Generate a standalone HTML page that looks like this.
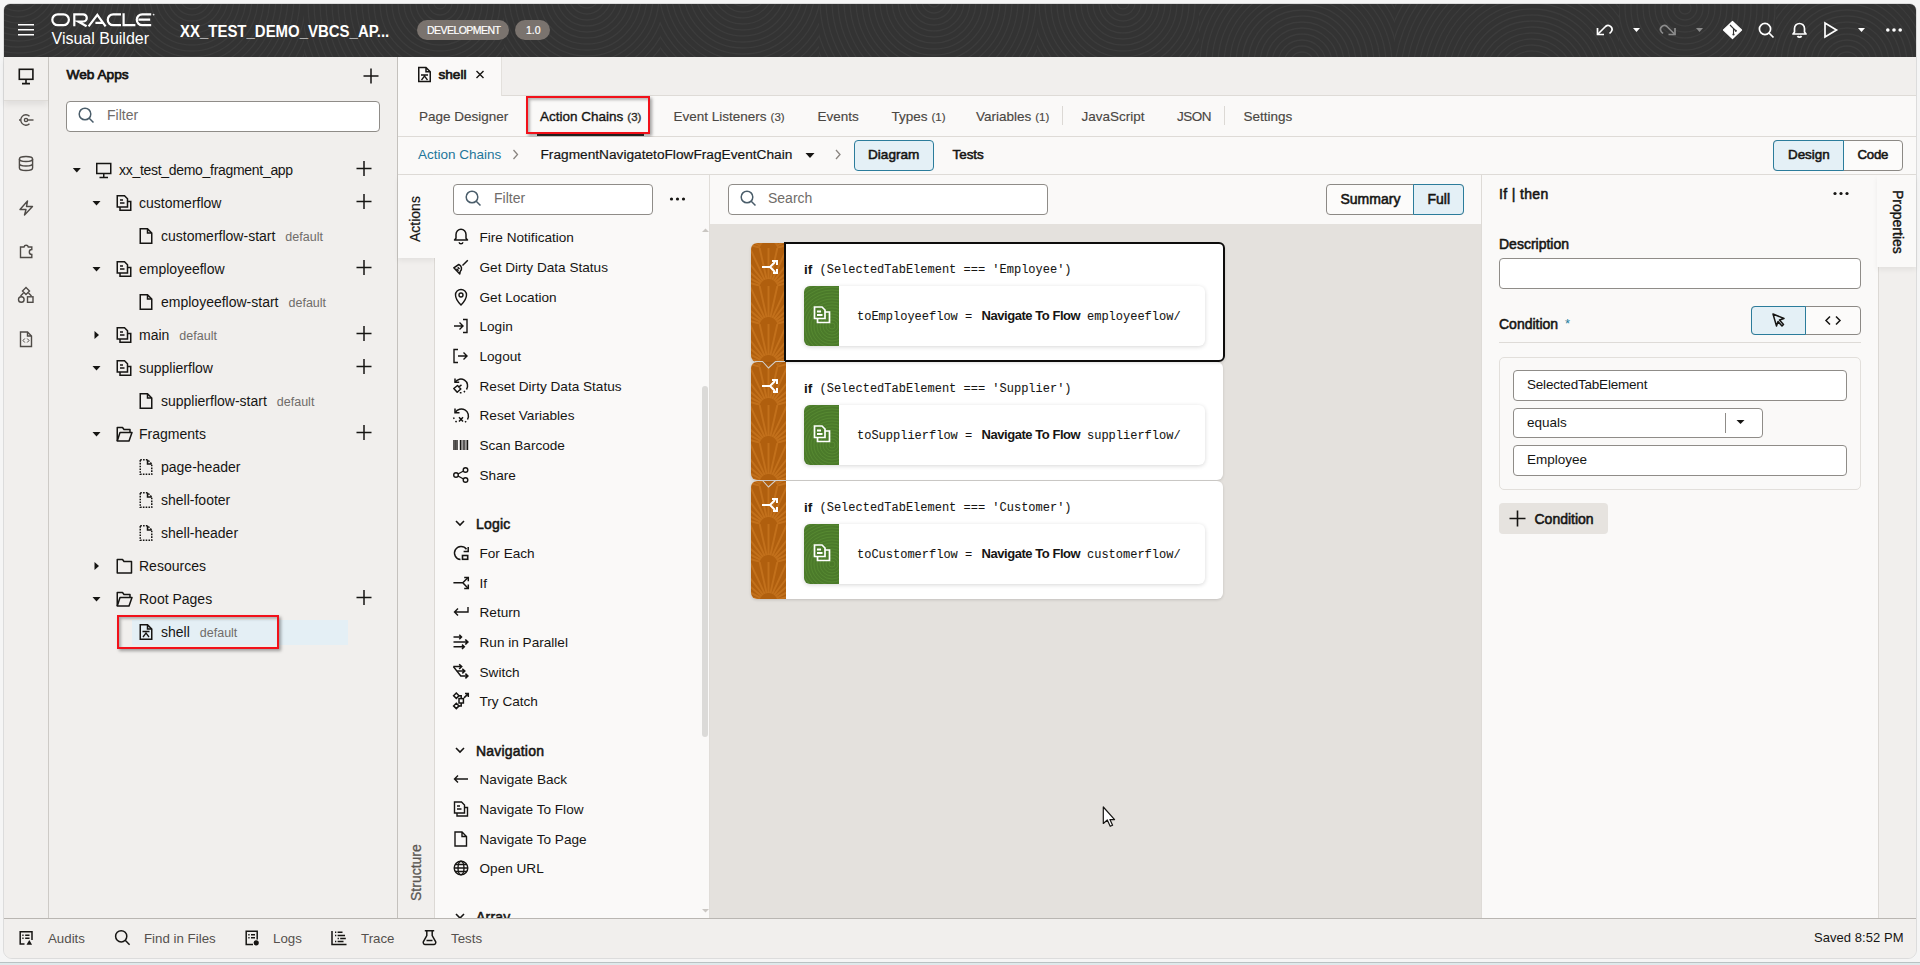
<!DOCTYPE html>
<html><head><meta charset="utf-8">
<style>
*{box-sizing:border-box;margin:0;padding:0}
html,body{width:1920px;height:965px;overflow:hidden;background:#f5f5f5;font-family:"Liberation Sans",sans-serif;color:#161513;font-size:14px}
.a{position:absolute}
svg{display:block}
#hdr{left:4px;top:4px;width:1912px;height:53px;background:#333;border-radius:6px 6px 0 0;overflow:hidden}
#rail{left:4px;top:57px;width:45px;height:861px;background:#f1efed;border-right:1px solid #cdcac6}
#tree{left:49px;top:57px;width:349px;height:861px;background:#f1efed;border-right:1px solid #c4c1bd}
#ed{left:398px;top:57px;width:1518px;height:861px;background:#faf9f8}
#status{left:4px;top:918px;width:1912px;height:40px;background:#f1efed;border-top:1px solid #b9b6b2;border-radius:0 0 8px 8px}
.t{position:absolute;white-space:nowrap;line-height:1}
.tr{font-size:14px;line-height:16px}
.st{top:109.5px;font-size:13.5px;color:#4a4743;-webkit-text-stroke:0.15px #4a4743}
.cnt{font-size:11.5px;margin-left:4px;color:#4a4743}
.al{font-size:13.6px;line-height:16px;color:#161513}
.ah{font-size:14px;line-height:16px;color:#161513;-webkit-text-stroke:0.55px #161513;letter-spacing:0.2px}
.mono{font-family:"Liberation Mono",monospace;font-size:12px;line-height:14px;color:#161513;white-space:pre;-webkit-text-stroke:0.08px #161513}
.orng{background:#bb650f}
.grn{background:#4d7a2a}
.sb{top:931.5px;font-size:13.3px;color:#55514d}
.sbd{font-size:14px;color:#161513;-webkit-text-stroke:0.55px #161513}
.df{font-size:12.5px;color:#6f6c69;margin-left:10px}
</style></head><body>
<svg width="0" height="0" style="position:absolute"><defs><pattern id="fan" patternUnits="userSpaceOnUse" width="35" height="38" x="0" y="5"><rect width="35" height="38" fill="#b05f0e"/><path d="M8.8,37.7 L-28.9,27.6 M9.5,35.8 L-25.1,17.8 M10.6,34.2 L-19.3,9.1 M12.0,32.9 L-11.7,1.9 M13.7,31.8 L-2.8,-3.5 M15.6,31.2 L7.1,-6.9 M17.5,31.0 L17.5,-8.0 M19.4,31.2 L27.9,-6.9 M21.3,31.8 L37.8,-3.5 M23.0,32.9 L46.7,1.9 M24.4,34.2 L54.3,9.1 M25.5,35.8 L60.1,17.8 M26.2,37.7 L63.9,27.6" stroke="#c2701b" stroke-width="1.9" fill="none"/></pattern><pattern id="gr" patternUnits="userSpaceOnUse" width="35" height="60"><rect width="35" height="60" fill="#4b7a2a"/><g fill="none" stroke="#578a31" stroke-width="0.9"><circle cx="28" cy="40" r="3"/><circle cx="28" cy="40" r="6"/><circle cx="28" cy="40" r="9"/><circle cx="28" cy="40" r="12"/><circle cx="28" cy="40" r="15"/><circle cx="28" cy="40" r="18"/><circle cx="28" cy="40" r="21"/><circle cx="28" cy="40" r="24"/><circle cx="28" cy="40" r="27"/><circle cx="28" cy="40" r="30"/><circle cx="28" cy="40" r="33"/><circle cx="28" cy="40" r="36"/><circle cx="28" cy="40" r="39"/><circle cx="28" cy="40" r="42"/><circle cx="28" cy="40" r="45"/><circle cx="28" cy="40" r="48"/><circle cx="28" cy="40" r="51"/><circle cx="28" cy="40" r="54"/><circle cx="28" cy="40" r="57"/></g></pattern></defs></svg>
<div class="a" style="left:3px;top:3px;width:1914px;height:956px;border:1px solid #dcdcdc;border-radius:8px 8px 9px 9px;background:#f1efed"></div>
<div id="hdr" class="a">
<svg class="a" style="left:0;top:0" width="1912" height="53"><defs><clipPath id="hb0"><rect x="-60" y="0" width="191" height="53"/></clipPath><clipPath id="hb1"><rect x="131" y="0" width="169" height="53"/></clipPath><clipPath id="hb2"><rect x="300" y="0" width="200" height="53"/></clipPath><clipPath id="hb3"><rect x="500" y="0" width="156" height="53"/></clipPath><clipPath id="hb4"><rect x="656" y="0" width="159" height="53"/></clipPath><clipPath id="hb5"><rect x="815" y="0" width="218" height="53"/></clipPath><clipPath id="hb6"><rect x="1033" y="0" width="162" height="53"/></clipPath><clipPath id="hb7"><rect x="1195" y="0" width="196" height="53"/></clipPath><clipPath id="hb8"><rect x="1391" y="0" width="224" height="53"/></clipPath><clipPath id="hb9"><rect x="1615" y="0" width="157" height="53"/></clipPath><clipPath id="hb10"><rect x="1772" y="0" width="214" height="53"/></clipPath></defs><g fill="none" stroke="#3c3c3c" stroke-width="1.3"><g clip-path="url(#hb0)"><circle cx="14" cy="-17" r="6"/><circle cx="14" cy="-17" r="12"/><circle cx="14" cy="-17" r="18"/><circle cx="14" cy="-17" r="24"/><circle cx="14" cy="-17" r="30"/><circle cx="14" cy="-17" r="36"/><circle cx="14" cy="-17" r="42"/><circle cx="14" cy="-17" r="48"/><circle cx="14" cy="-17" r="54"/><circle cx="14" cy="-17" r="60"/><circle cx="14" cy="-17" r="66"/><circle cx="14" cy="-17" r="72"/><circle cx="14" cy="-17" r="78"/><circle cx="14" cy="-17" r="84"/><circle cx="14" cy="-17" r="90"/><circle cx="14" cy="-17" r="96"/><circle cx="14" cy="-17" r="102"/><circle cx="14" cy="-17" r="108"/><circle cx="14" cy="-17" r="114"/><circle cx="14" cy="-17" r="120"/><circle cx="14" cy="-17" r="126"/><circle cx="14" cy="-17" r="132"/><circle cx="14" cy="-17" r="138"/><circle cx="14" cy="-17" r="144"/><circle cx="14" cy="-17" r="150"/><circle cx="14" cy="-17" r="156"/><circle cx="14" cy="-17" r="162"/><circle cx="14" cy="-17" r="168"/><circle cx="14" cy="-17" r="174"/><circle cx="14" cy="-17" r="180"/><circle cx="14" cy="-17" r="186"/><circle cx="14" cy="-17" r="192"/><circle cx="14" cy="-17" r="198"/></g><g clip-path="url(#hb1)"><circle cx="188" cy="-7" r="6"/><circle cx="188" cy="-7" r="12"/><circle cx="188" cy="-7" r="18"/><circle cx="188" cy="-7" r="24"/><circle cx="188" cy="-7" r="30"/><circle cx="188" cy="-7" r="36"/><circle cx="188" cy="-7" r="42"/><circle cx="188" cy="-7" r="48"/><circle cx="188" cy="-7" r="54"/><circle cx="188" cy="-7" r="60"/><circle cx="188" cy="-7" r="66"/><circle cx="188" cy="-7" r="72"/><circle cx="188" cy="-7" r="78"/><circle cx="188" cy="-7" r="84"/><circle cx="188" cy="-7" r="90"/><circle cx="188" cy="-7" r="96"/><circle cx="188" cy="-7" r="102"/><circle cx="188" cy="-7" r="108"/><circle cx="188" cy="-7" r="114"/><circle cx="188" cy="-7" r="120"/><circle cx="188" cy="-7" r="126"/><circle cx="188" cy="-7" r="132"/><circle cx="188" cy="-7" r="138"/><circle cx="188" cy="-7" r="144"/><circle cx="188" cy="-7" r="150"/><circle cx="188" cy="-7" r="156"/><circle cx="188" cy="-7" r="162"/><circle cx="188" cy="-7" r="168"/><circle cx="188" cy="-7" r="174"/><circle cx="188" cy="-7" r="180"/><circle cx="188" cy="-7" r="186"/><circle cx="188" cy="-7" r="192"/><circle cx="188" cy="-7" r="198"/></g><g clip-path="url(#hb2)"><circle cx="436" cy="-1" r="6"/><circle cx="436" cy="-1" r="12"/><circle cx="436" cy="-1" r="18"/><circle cx="436" cy="-1" r="24"/><circle cx="436" cy="-1" r="30"/><circle cx="436" cy="-1" r="36"/><circle cx="436" cy="-1" r="42"/><circle cx="436" cy="-1" r="48"/><circle cx="436" cy="-1" r="54"/><circle cx="436" cy="-1" r="60"/><circle cx="436" cy="-1" r="66"/><circle cx="436" cy="-1" r="72"/><circle cx="436" cy="-1" r="78"/><circle cx="436" cy="-1" r="84"/><circle cx="436" cy="-1" r="90"/><circle cx="436" cy="-1" r="96"/><circle cx="436" cy="-1" r="102"/><circle cx="436" cy="-1" r="108"/><circle cx="436" cy="-1" r="114"/><circle cx="436" cy="-1" r="120"/><circle cx="436" cy="-1" r="126"/><circle cx="436" cy="-1" r="132"/><circle cx="436" cy="-1" r="138"/><circle cx="436" cy="-1" r="144"/><circle cx="436" cy="-1" r="150"/><circle cx="436" cy="-1" r="156"/><circle cx="436" cy="-1" r="162"/><circle cx="436" cy="-1" r="168"/><circle cx="436" cy="-1" r="174"/><circle cx="436" cy="-1" r="180"/><circle cx="436" cy="-1" r="186"/><circle cx="436" cy="-1" r="192"/><circle cx="436" cy="-1" r="198"/></g><g clip-path="url(#hb3)"><circle cx="583" cy="-8" r="6"/><circle cx="583" cy="-8" r="12"/><circle cx="583" cy="-8" r="18"/><circle cx="583" cy="-8" r="24"/><circle cx="583" cy="-8" r="30"/><circle cx="583" cy="-8" r="36"/><circle cx="583" cy="-8" r="42"/><circle cx="583" cy="-8" r="48"/><circle cx="583" cy="-8" r="54"/><circle cx="583" cy="-8" r="60"/><circle cx="583" cy="-8" r="66"/><circle cx="583" cy="-8" r="72"/><circle cx="583" cy="-8" r="78"/><circle cx="583" cy="-8" r="84"/><circle cx="583" cy="-8" r="90"/><circle cx="583" cy="-8" r="96"/><circle cx="583" cy="-8" r="102"/><circle cx="583" cy="-8" r="108"/><circle cx="583" cy="-8" r="114"/><circle cx="583" cy="-8" r="120"/><circle cx="583" cy="-8" r="126"/><circle cx="583" cy="-8" r="132"/><circle cx="583" cy="-8" r="138"/><circle cx="583" cy="-8" r="144"/><circle cx="583" cy="-8" r="150"/><circle cx="583" cy="-8" r="156"/><circle cx="583" cy="-8" r="162"/><circle cx="583" cy="-8" r="168"/><circle cx="583" cy="-8" r="174"/><circle cx="583" cy="-8" r="180"/><circle cx="583" cy="-8" r="186"/><circle cx="583" cy="-8" r="192"/><circle cx="583" cy="-8" r="198"/></g><g clip-path="url(#hb4)"><circle cx="739" cy="-16" r="6"/><circle cx="739" cy="-16" r="12"/><circle cx="739" cy="-16" r="18"/><circle cx="739" cy="-16" r="24"/><circle cx="739" cy="-16" r="30"/><circle cx="739" cy="-16" r="36"/><circle cx="739" cy="-16" r="42"/><circle cx="739" cy="-16" r="48"/><circle cx="739" cy="-16" r="54"/><circle cx="739" cy="-16" r="60"/><circle cx="739" cy="-16" r="66"/><circle cx="739" cy="-16" r="72"/><circle cx="739" cy="-16" r="78"/><circle cx="739" cy="-16" r="84"/><circle cx="739" cy="-16" r="90"/><circle cx="739" cy="-16" r="96"/><circle cx="739" cy="-16" r="102"/><circle cx="739" cy="-16" r="108"/><circle cx="739" cy="-16" r="114"/><circle cx="739" cy="-16" r="120"/><circle cx="739" cy="-16" r="126"/><circle cx="739" cy="-16" r="132"/><circle cx="739" cy="-16" r="138"/><circle cx="739" cy="-16" r="144"/><circle cx="739" cy="-16" r="150"/><circle cx="739" cy="-16" r="156"/><circle cx="739" cy="-16" r="162"/><circle cx="739" cy="-16" r="168"/><circle cx="739" cy="-16" r="174"/><circle cx="739" cy="-16" r="180"/><circle cx="739" cy="-16" r="186"/><circle cx="739" cy="-16" r="192"/><circle cx="739" cy="-16" r="198"/></g><g clip-path="url(#hb5)"><circle cx="930" cy="-3" r="6"/><circle cx="930" cy="-3" r="12"/><circle cx="930" cy="-3" r="18"/><circle cx="930" cy="-3" r="24"/><circle cx="930" cy="-3" r="30"/><circle cx="930" cy="-3" r="36"/><circle cx="930" cy="-3" r="42"/><circle cx="930" cy="-3" r="48"/><circle cx="930" cy="-3" r="54"/><circle cx="930" cy="-3" r="60"/><circle cx="930" cy="-3" r="66"/><circle cx="930" cy="-3" r="72"/><circle cx="930" cy="-3" r="78"/><circle cx="930" cy="-3" r="84"/><circle cx="930" cy="-3" r="90"/><circle cx="930" cy="-3" r="96"/><circle cx="930" cy="-3" r="102"/><circle cx="930" cy="-3" r="108"/><circle cx="930" cy="-3" r="114"/><circle cx="930" cy="-3" r="120"/><circle cx="930" cy="-3" r="126"/><circle cx="930" cy="-3" r="132"/><circle cx="930" cy="-3" r="138"/><circle cx="930" cy="-3" r="144"/><circle cx="930" cy="-3" r="150"/><circle cx="930" cy="-3" r="156"/><circle cx="930" cy="-3" r="162"/><circle cx="930" cy="-3" r="168"/><circle cx="930" cy="-3" r="174"/><circle cx="930" cy="-3" r="180"/><circle cx="930" cy="-3" r="186"/><circle cx="930" cy="-3" r="192"/><circle cx="930" cy="-3" r="198"/></g><g clip-path="url(#hb6)"><circle cx="1119" cy="-1" r="6"/><circle cx="1119" cy="-1" r="12"/><circle cx="1119" cy="-1" r="18"/><circle cx="1119" cy="-1" r="24"/><circle cx="1119" cy="-1" r="30"/><circle cx="1119" cy="-1" r="36"/><circle cx="1119" cy="-1" r="42"/><circle cx="1119" cy="-1" r="48"/><circle cx="1119" cy="-1" r="54"/><circle cx="1119" cy="-1" r="60"/><circle cx="1119" cy="-1" r="66"/><circle cx="1119" cy="-1" r="72"/><circle cx="1119" cy="-1" r="78"/><circle cx="1119" cy="-1" r="84"/><circle cx="1119" cy="-1" r="90"/><circle cx="1119" cy="-1" r="96"/><circle cx="1119" cy="-1" r="102"/><circle cx="1119" cy="-1" r="108"/><circle cx="1119" cy="-1" r="114"/><circle cx="1119" cy="-1" r="120"/><circle cx="1119" cy="-1" r="126"/><circle cx="1119" cy="-1" r="132"/><circle cx="1119" cy="-1" r="138"/><circle cx="1119" cy="-1" r="144"/><circle cx="1119" cy="-1" r="150"/><circle cx="1119" cy="-1" r="156"/><circle cx="1119" cy="-1" r="162"/><circle cx="1119" cy="-1" r="168"/><circle cx="1119" cy="-1" r="174"/><circle cx="1119" cy="-1" r="180"/><circle cx="1119" cy="-1" r="186"/><circle cx="1119" cy="-1" r="192"/><circle cx="1119" cy="-1" r="198"/></g><g clip-path="url(#hb7)"><circle cx="1298" cy="60" r="6"/><circle cx="1298" cy="60" r="12"/><circle cx="1298" cy="60" r="18"/><circle cx="1298" cy="60" r="24"/><circle cx="1298" cy="60" r="30"/><circle cx="1298" cy="60" r="36"/><circle cx="1298" cy="60" r="42"/><circle cx="1298" cy="60" r="48"/><circle cx="1298" cy="60" r="54"/><circle cx="1298" cy="60" r="60"/><circle cx="1298" cy="60" r="66"/><circle cx="1298" cy="60" r="72"/><circle cx="1298" cy="60" r="78"/><circle cx="1298" cy="60" r="84"/><circle cx="1298" cy="60" r="90"/><circle cx="1298" cy="60" r="96"/><circle cx="1298" cy="60" r="102"/><circle cx="1298" cy="60" r="108"/><circle cx="1298" cy="60" r="114"/><circle cx="1298" cy="60" r="120"/><circle cx="1298" cy="60" r="126"/><circle cx="1298" cy="60" r="132"/><circle cx="1298" cy="60" r="138"/><circle cx="1298" cy="60" r="144"/><circle cx="1298" cy="60" r="150"/><circle cx="1298" cy="60" r="156"/><circle cx="1298" cy="60" r="162"/><circle cx="1298" cy="60" r="168"/><circle cx="1298" cy="60" r="174"/><circle cx="1298" cy="60" r="180"/><circle cx="1298" cy="60" r="186"/><circle cx="1298" cy="60" r="192"/><circle cx="1298" cy="60" r="198"/></g><g clip-path="url(#hb8)"><circle cx="1528" cy="77" r="6"/><circle cx="1528" cy="77" r="12"/><circle cx="1528" cy="77" r="18"/><circle cx="1528" cy="77" r="24"/><circle cx="1528" cy="77" r="30"/><circle cx="1528" cy="77" r="36"/><circle cx="1528" cy="77" r="42"/><circle cx="1528" cy="77" r="48"/><circle cx="1528" cy="77" r="54"/><circle cx="1528" cy="77" r="60"/><circle cx="1528" cy="77" r="66"/><circle cx="1528" cy="77" r="72"/><circle cx="1528" cy="77" r="78"/><circle cx="1528" cy="77" r="84"/><circle cx="1528" cy="77" r="90"/><circle cx="1528" cy="77" r="96"/><circle cx="1528" cy="77" r="102"/><circle cx="1528" cy="77" r="108"/><circle cx="1528" cy="77" r="114"/><circle cx="1528" cy="77" r="120"/><circle cx="1528" cy="77" r="126"/><circle cx="1528" cy="77" r="132"/><circle cx="1528" cy="77" r="138"/><circle cx="1528" cy="77" r="144"/><circle cx="1528" cy="77" r="150"/><circle cx="1528" cy="77" r="156"/><circle cx="1528" cy="77" r="162"/><circle cx="1528" cy="77" r="168"/><circle cx="1528" cy="77" r="174"/><circle cx="1528" cy="77" r="180"/><circle cx="1528" cy="77" r="186"/><circle cx="1528" cy="77" r="192"/><circle cx="1528" cy="77" r="198"/></g><g clip-path="url(#hb9)"><circle cx="1681" cy="4" r="6"/><circle cx="1681" cy="4" r="12"/><circle cx="1681" cy="4" r="18"/><circle cx="1681" cy="4" r="24"/><circle cx="1681" cy="4" r="30"/><circle cx="1681" cy="4" r="36"/><circle cx="1681" cy="4" r="42"/><circle cx="1681" cy="4" r="48"/><circle cx="1681" cy="4" r="54"/><circle cx="1681" cy="4" r="60"/><circle cx="1681" cy="4" r="66"/><circle cx="1681" cy="4" r="72"/><circle cx="1681" cy="4" r="78"/><circle cx="1681" cy="4" r="84"/><circle cx="1681" cy="4" r="90"/><circle cx="1681" cy="4" r="96"/><circle cx="1681" cy="4" r="102"/><circle cx="1681" cy="4" r="108"/><circle cx="1681" cy="4" r="114"/><circle cx="1681" cy="4" r="120"/><circle cx="1681" cy="4" r="126"/><circle cx="1681" cy="4" r="132"/><circle cx="1681" cy="4" r="138"/><circle cx="1681" cy="4" r="144"/><circle cx="1681" cy="4" r="150"/><circle cx="1681" cy="4" r="156"/><circle cx="1681" cy="4" r="162"/><circle cx="1681" cy="4" r="168"/><circle cx="1681" cy="4" r="174"/><circle cx="1681" cy="4" r="180"/><circle cx="1681" cy="4" r="186"/><circle cx="1681" cy="4" r="192"/><circle cx="1681" cy="4" r="198"/></g><g clip-path="url(#hb10)"><circle cx="1843" cy="60" r="6"/><circle cx="1843" cy="60" r="12"/><circle cx="1843" cy="60" r="18"/><circle cx="1843" cy="60" r="24"/><circle cx="1843" cy="60" r="30"/><circle cx="1843" cy="60" r="36"/><circle cx="1843" cy="60" r="42"/><circle cx="1843" cy="60" r="48"/><circle cx="1843" cy="60" r="54"/><circle cx="1843" cy="60" r="60"/><circle cx="1843" cy="60" r="66"/><circle cx="1843" cy="60" r="72"/><circle cx="1843" cy="60" r="78"/><circle cx="1843" cy="60" r="84"/><circle cx="1843" cy="60" r="90"/><circle cx="1843" cy="60" r="96"/><circle cx="1843" cy="60" r="102"/><circle cx="1843" cy="60" r="108"/><circle cx="1843" cy="60" r="114"/><circle cx="1843" cy="60" r="120"/><circle cx="1843" cy="60" r="126"/><circle cx="1843" cy="60" r="132"/><circle cx="1843" cy="60" r="138"/><circle cx="1843" cy="60" r="144"/><circle cx="1843" cy="60" r="150"/><circle cx="1843" cy="60" r="156"/><circle cx="1843" cy="60" r="162"/><circle cx="1843" cy="60" r="168"/><circle cx="1843" cy="60" r="174"/><circle cx="1843" cy="60" r="180"/><circle cx="1843" cy="60" r="186"/><circle cx="1843" cy="60" r="192"/><circle cx="1843" cy="60" r="198"/></g></g></svg>
<svg class="a" style="left:14px;top:20px" width="20" height="16"><g stroke="#fff" stroke-width="1.6"><path d="M0,0.8H16M0,5.8H16M0,10.8H16" transform="translate(0,0)"/></g></svg>
<svg class="a" style="left:42px;top:2px" width="116" height="24" viewBox="46 6 116 24"><g fill="none" stroke="#fff" stroke-width="2.2">
<rect x="52.3" y="14.3" width="16.6" height="10.9" rx="5.45"/>
<path d="M74.3,26.3 V14.3 H83.2 A3.6,3.6 0 0 1 83.2,21.5 H78.2 L86.6,26.3"/>
<path d="M88.6,26.4 L97.3,14.8 L105.6,26.4 M95.4,22.9 H102.4" stroke-linejoin="miter"/>
<path d="M121,14.3 H113.2 A5.45,5.45 0 0 0 113.2,25.2 H121"/>
<path d="M123.6,13.2 V25.2 H135.4"/>
<path d="M151.2,14.3 H142.2 A5.45,5.45 0 0 0 142.2,25.2 H151.2 M138.4,19.7 H150.2"/>
</g><circle cx="153.6" cy="14.6" r="0.9" fill="#ddd"/></svg>
<div class="t" style="left:47.5px;top:26.5px;font-size:16px;color:#fff">Visual Builder</div>
<div class="t" style="left:176px;top:19.5px;font-size:16px;font-weight:bold;color:#fff;transform:scaleX(0.935);transform-origin:0 0">XX_TEST_DEMO_VBCS_AP...</div>
<div class="a" style="left:413px;top:16px;width:92px;height:20px;border-radius:10px;background:#7a736e"></div>
<div class="t" style="left:423px;top:21px;font-size:10.5px;color:#fff;letter-spacing:-0.55px;-webkit-text-stroke:0.2px #fff">DEVELOPMENT</div>
<div class="a" style="left:511px;top:16px;width:35px;height:20px;border-radius:10px;background:#7a736e"></div>
<div class="t" style="left:522px;top:21px;font-size:10.5px;color:#fff;-webkit-text-stroke:0.2px #fff">1.0</div>
</div>
<svg class="a" style="left:0;top:0" width="1920" height="60"><g fill="none" stroke="#fff" stroke-width="1.7">
<path d="M1597.5,28 V34.5 H1604"/><path d="M1597.5,34.5 L1605.5,26.5 A3.9,3.9 0 0 1 1611,32 L1609.5,33.5"/>
<path d="M1758.5,29.5" /><circle cx="1765" cy="29" r="5.6"/><path d="M1769,33 L1773.5,37.5"/>
<path d="M1793,34 H1806 L1804.5,32 V28.5 A5,5 0 0 0 1794.5,28.5 V32 Z" stroke-linejoin="round"/><path d="M1797.5,36 A2.2,2 0 0 0 1801.5,36"/>
<path d="M1825,23 V37 L1836.5,30 Z" stroke-linejoin="miter"/>
</g>
<g fill="none" stroke="#8c8c8c" stroke-width="1.7"><path d="M1675,28 V34.5 H1668.5"/><path d="M1675,34.5 L1667,26.5 A3.9,3.9 0 0 0 1661.5,32 L1663,33.5"/></g>
<path d="M1633,28 H1640 L1636.5,32 Z" fill="#fff"/><path d="M1696,28 H1703 L1699.5,32 Z" fill="#8c8c8c"/><path d="M1858,28 H1865 L1861.5,32 Z" fill="#fff"/>
<path d="M1732.5,21.5 L1741.5,30 L1732.5,38.5 L1723.5,30 Z" fill="#fff" stroke="#fff" stroke-linejoin="round" stroke-width="1.2"/>
<g stroke="#333" stroke-width="1.1" fill="none"><path d="M1730,25 L1733.5,28.5 V34.5 M1733.5,28.5 L1735.5,30.5"/></g><circle cx="1733.5" cy="34.5" r="1.1" fill="#333"/><circle cx="1735.8" cy="30.8" r="1.1" fill="#333"/>
<circle cx="1887.8" cy="30" r="1.8" fill="#fff"/><circle cx="1894" cy="30" r="1.8" fill="#fff"/><circle cx="1900.2" cy="30" r="1.8" fill="#fff"/>
</svg>
<div id="rail" class="a"></div>
<div class="a" style="left:4px;top:57px;width:44px;height:44px;background:#f1efed;border-bottom:1px solid #dedbd7;box-shadow:0 4px 6px rgba(0,0,0,0.07)"></div>
<svg class="a" style="left:0;top:57px" width="50" height="300" viewBox="0 57 50 300"><g fill="none" stroke="#161513" stroke-width="1.6">
<rect x="19.3" y="69.3" width="13.6" height="10" />
<path d="M26,79.5 V83.2 M22,83.6 H30"/></g>
<g fill="none" stroke="#4f4b47" stroke-width="1.4">
<path d="M29.5,116.2 A5.2,5.2 0 1 0 29.5,123.8"/><circle cx="26" cy="120" r="1.6"/><path d="M27.6,120 H33.5"/><path d="M19,120 H20.5"/>
<ellipse cx="26" cy="159" rx="6.6" ry="2.5"/><path d="M19.4,159 V168 A6.6,2.5 0 0 0 32.6,168 V159 M19.4,163.5 A6.6,2.5 0 0 0 32.6,163.5"/>
<path d="M27.5,201 L20,209.5 H26 L24.5,215 L32.5,206.5 H26.5 Z" stroke-linejoin="round"/>
<path d="M20.5,257.5 V247 H24 A2.2,2.2 0 0 1 28.3,247 H31.8 V249.5 A2.2,2.2 0 0 0 31.8,254.5 V257.5 Z"/>
<path d="M26,287.5 L29.5,291 L26,294.5 L22.5,291 Z"/><circle cx="21.3" cy="299.5" r="2.8"/><rect x="27.5" y="296.8" width="5.5" height="5.5"/><path d="M23.5,293 L20.5,296 M28.5,293 L31.5,296"/>
<path d="M20.5,332 H27.5 L31.5,336 V346.5 H20.5 Z M27.5,332 V336 H31.5"/><path d="M24.8,338.5 L23,340.5 L24.8,342.5 M27.2,338.5 L29,340.5 L27.2,342.5" stroke-width="1"/>
</g></svg>
<div id="tree" class="a"></div>
<div class="t sbd" style="left:66.5px;top:68px;font-size:13.7px;-webkit-text-stroke:0.75px #161513">Web Apps</div>
<div class="a" style="left:66px;top:101px;width:314px;height:31px;background:#fff;border:1px solid #8f8c88;border-radius:4px"></div>
<div class="t" style="left:107px;top:108px;font-size:14px;color:#6f6c69">Filter</div>
<div class="a" style="left:132px;top:620px;width:216px;height:25px;background:#e4eff5"></div>
<svg class="a" style="left:0;top:0" width="400" height="700">
<g fill="none" stroke="#4a5d6a" stroke-width="1.5"><circle cx="85" cy="114" r="5.8"/><path d="M89.2,118.2 L93.5,122.5"/></g>
<path d="M363.5,76 H378.5 M371,68.5 V83.5" stroke="#161513" stroke-width="1.5" fill="none"/>
<path d="M72.8,168 H80.8 L76.8,172.5 Z" fill="#161513"/>
<g fill="none" stroke="#161513" stroke-width="1.5"><rect x="96.75" y="163.5" width="14" height="10"/><path d="M103.75,173.5 V177 M99.5,177.5 H108"/></g>
<path d="M356.5,168.5 H371.5 M364,161.0 V176.0" stroke="#161513" stroke-width="1.5" fill="none"/>
<path d="M92.5,201 H100.5 L96.5,205.5 Z" fill="#161513"/>
<g fill="none" stroke="#161513" stroke-width="1.5"><path d="M117.25,207 V195.75 H124.5 L127.5,198.75 V207 Z"/><path d="M120.0,207 V210.25 H130.75 V201.5 H127.5"/><path d="M120.0,200 H123.0 M120.0,203 H124.5"/></g>
<path d="M356.5,201.5 H371.5 M364,194.0 V209.0" stroke="#161513" stroke-width="1.5" fill="none"/>
<g fill="none" stroke="#161513" stroke-width="1.5" stroke-linejoin="miter"><path d="M140.25,228.75 H147.5 L151.75,233 V243.25 H140.25 Z M147.5,228.75 V233 H151.75"/></g>
<path d="M92.5,267 H100.5 L96.5,271.5 Z" fill="#161513"/>
<g fill="none" stroke="#161513" stroke-width="1.5"><path d="M117.25,273 V261.75 H124.5 L127.5,264.75 V273 Z"/><path d="M120.0,273 V276.25 H130.75 V267.5 H127.5"/><path d="M120.0,266 H123.0 M120.0,269 H124.5"/></g>
<path d="M356.5,267.5 H371.5 M364,260.0 V275.0" stroke="#161513" stroke-width="1.5" fill="none"/>
<g fill="none" stroke="#161513" stroke-width="1.5" stroke-linejoin="miter"><path d="M140.25,294.75 H147.5 L151.75,299 V309.25 H140.25 Z M147.5,294.75 V299 H151.75"/></g>
<path d="M94.5,331 V339 L99.0,335 Z" fill="#161513"/>
<g fill="none" stroke="#161513" stroke-width="1.5"><path d="M117.25,339 V327.75 H124.5 L127.5,330.75 V339 Z"/><path d="M120.0,339 V342.25 H130.75 V333.5 H127.5"/><path d="M120.0,332 H123.0 M120.0,335 H124.5"/></g>
<path d="M356.5,333.5 H371.5 M364,326.0 V341.0" stroke="#161513" stroke-width="1.5" fill="none"/>
<path d="M92.5,366 H100.5 L96.5,370.5 Z" fill="#161513"/>
<g fill="none" stroke="#161513" stroke-width="1.5"><path d="M117.25,372 V360.75 H124.5 L127.5,363.75 V372 Z"/><path d="M120.0,372 V375.25 H130.75 V366.5 H127.5"/><path d="M120.0,365 H123.0 M120.0,368 H124.5"/></g>
<path d="M356.5,366.5 H371.5 M364,359.0 V374.0" stroke="#161513" stroke-width="1.5" fill="none"/>
<g fill="none" stroke="#161513" stroke-width="1.5" stroke-linejoin="miter"><path d="M140.25,393.75 H147.5 L151.75,398 V408.25 H140.25 Z M147.5,393.75 V398 H151.75"/></g>
<path d="M92.5,432 H100.5 L96.5,436.5 Z" fill="#161513"/>
<g fill="none" stroke="#161513" stroke-width="1.5" stroke-linejoin="round"><path d="M117.25,441 V427.5 H122.5 L124.0,429.5 H130.0 V432"/><path d="M117.25,441 L120.0,432.5 H132.0 L129.0,441 Z"/></g>
<path d="M356.5,432.5 H371.5 M364,425.0 V440.0" stroke="#161513" stroke-width="1.5" fill="none"/>
<g fill="none" stroke="#161513" stroke-width="1.5"><path d="M140.25,459.75 H147.5 L151.75,464 V474.25 H140.25 Z" stroke-dasharray="1.6 1.2"/><path d="M147.5,459.75 V464 H151.75"/></g>
<g fill="none" stroke="#161513" stroke-width="1.5"><path d="M140.25,492.75 H147.5 L151.75,497 V507.25 H140.25 Z" stroke-dasharray="1.6 1.2"/><path d="M147.5,492.75 V497 H151.75"/></g>
<g fill="none" stroke="#161513" stroke-width="1.5"><path d="M140.25,525.75 H147.5 L151.75,530 V540.25 H140.25 Z" stroke-dasharray="1.6 1.2"/><path d="M147.5,525.75 V530 H151.75"/></g>
<path d="M94.5,562 V570 L99.0,566 Z" fill="#161513"/>
<g fill="none" stroke="#161513" stroke-width="1.5" stroke-linejoin="round"><path d="M117.25,573 V559.5 H122.5 L124.0,561.5 H131.5 V573 Z"/></g>
<path d="M92.5,597 H100.5 L96.5,601.5 Z" fill="#161513"/>
<g fill="none" stroke="#161513" stroke-width="1.5" stroke-linejoin="round"><path d="M117.25,606 V592.5 H122.5 L124.0,594.5 H130.0 V597"/><path d="M117.25,606 L120.0,597.5 H132.0 L129.0,606 Z"/></g>
<path d="M356.5,597.5 H371.5 M364,590.0 V605.0" stroke="#161513" stroke-width="1.5" fill="none"/>
<g fill="none" stroke="#161513" stroke-width="1.5"><path d="M140.25,624.75 H147.5 L151.75,629 V639.25 H140.25 Z M147.5,624.75 V629 H151.75"/><path d="M142.5,631.5 H149.5 M143.0,637 L146.0,633 L149.0,637" stroke-width="1.3"/></g>
</svg>
<div class="t tr" style="left:119px;top:162px"><span style="letter-spacing:-0.3px">xx_test_demo_fragment_app</span></div>
<div class="t tr" style="left:139px;top:195px">customerflow</div>
<div class="t tr" style="left:161px;top:228px">customerflow-start<span class="df">default</span></div>
<div class="t tr" style="left:139px;top:261px">employeeflow</div>
<div class="t tr" style="left:161px;top:294px">employeeflow-start<span class="df">default</span></div>
<div class="t tr" style="left:139px;top:327px">main<span class="df">default</span></div>
<div class="t tr" style="left:139px;top:360px">supplierflow</div>
<div class="t tr" style="left:161px;top:393px">supplierflow-start<span class="df">default</span></div>
<div class="t tr" style="left:139px;top:426px">Fragments</div>
<div class="t tr" style="left:161px;top:459px">page-header</div>
<div class="t tr" style="left:161px;top:492px">shell-footer</div>
<div class="t tr" style="left:161px;top:525px">shell-header</div>
<div class="t tr" style="left:139px;top:558px">Resources</div>
<div class="t tr" style="left:139px;top:591px">Root Pages</div>
<div class="t tr" style="left:161px;top:624px">shell<span class="df">default</span></div>
<div class="a" style="left:117px;top:615px;width:162px;height:34px;border:2.5px solid #f2111a;box-shadow:2px 2px 3px rgba(0,0,0,0.35), inset 2px 2px 3px rgba(0,0,0,0.28)"></div>

<div id="ed" class="a"></div>
<!-- tab strip -->
<div class="a" style="left:398px;top:57px;width:1518px;height:39px;background:#f1efed;border-bottom:1px solid #dedbd7"></div>
<div class="a" style="left:398px;top:57px;width:104px;height:39px;background:#faf9f8;border-right:1px solid #e3e0dc"></div>
<svg class="a" style="left:0;top:0" width="520" height="100"><g fill="none" stroke="#161513" stroke-width="1.5"><path d="M418.75,67.5 H426 L430.25,71.75 V81.5 H418.75 Z M426,67.5 V71.75 H430.25"/><path d="M421,75 H428 M421.5,80 L424.5,76 L427.5,80" stroke-width="1.3"/></g>
<path d="M476.5,71 L483.5,78 M483.5,71 L476.5,78" stroke="#161513" stroke-width="1.4"/></svg>
<div class="t sbd" style="left:438.5px;top:67.5px;font-size:13.6px;-webkit-text-stroke:0.7px #161513">shell</div>
<!-- subtabs -->
<div class="a" style="left:398px;top:96px;width:1518px;height:41px;background:#faf9f8;border-bottom:1px solid #dedbd7"></div>
<div class="t st" style="left:419px">Page Designer</div>
<div class="t st" style="left:540px;color:#161513;-webkit-text-stroke:0.35px #161513">Action Chains<span class="cnt">(3)</span></div>
<div class="a" style="left:537px;top:133px;width:107px;height:3px;background:#2f2d2b"></div>
<div class="t st" style="left:673.5px">Event Listeners<span class="cnt">(3)</span></div>
<div class="t st" style="left:817.5px">Events</div>
<div class="t st" style="left:891.5px">Types<span class="cnt">(1)</span></div>
<div class="t st" style="left:976px">Variables<span class="cnt">(1)</span></div>
<div class="a" style="left:1062px;top:106px;width:1px;height:19px;background:#dcd9d5"></div>
<div class="t st" style="left:1081.5px">JavaScript</div>
<div class="t st" style="left:1177px;letter-spacing:-0.5px">JSON</div>
<div class="a" style="left:1224px;top:106px;width:1px;height:19px;background:#dcd9d5"></div>
<div class="t st" style="left:1243.5px">Settings</div>
<div class="a" style="left:526px;top:96px;width:124px;height:38px;border:2.5px solid #f2111a;box-shadow:2px 2px 3px rgba(0,0,0,0.35), inset 2px 2px 3px rgba(0,0,0,0.28)"></div>
<!-- breadcrumb -->
<div class="a" style="left:398px;top:137px;width:1518px;height:38px;background:#faf9f8;border-bottom:1px solid #dedbd7"></div>
<div class="t" style="left:418px;top:148px;font-size:13.5px;color:#23769a">Action Chains</div>
<svg class="a" style="left:0;top:130px" width="1000" height="50" viewBox="0 130 1000 50"><g fill="none" stroke="#8a8580" stroke-width="1.3"><path d="M513.5,150 L517.5,154.5 L513.5,159"/><path d="M836,150 L840,154.5 L836,159"/></g>
<path d="M805.5,153 H814.5 L810,158 Z" fill="#161513"/></svg>
<div class="t" style="left:540.5px;top:148px;font-size:13.7px;color:#161513;-webkit-text-stroke:0.2px #161513">FragmentNavigatetoFlowFragEventChain</div>
<div class="a" style="left:854px;top:140px;width:80px;height:31px;background:#e4f0f6;border:1px solid #2b7c9b;border-radius:4px"></div>
<div class="t sbd" style="left:868px;top:148px;font-size:13.6px">Diagram</div>
<div class="t sbd" style="left:952.5px;top:148px;font-size:13.4px">Tests</div>
<div class="a" style="left:1773px;top:140px;width:130px;height:31px;background:#fcfbfa;border:1px solid #8c8985;border-radius:4px"></div>
<div class="a" style="left:1773px;top:140px;width:71px;height:31px;background:#e4f0f6;border:1px solid #2b7c9b;border-radius:4px 0 0 4px"></div>
<div class="t sbd" style="left:1788px;top:148px;font-size:13.4px">Design</div>
<div class="t sbd" style="left:1857.5px;top:148px;font-size:13.2px;letter-spacing:-0.2px">Code</div>



<!-- content area -->
<div class="a" style="left:398px;top:175px;width:37px;height:743px;background:#f1efed;border-right:1px solid #dcd9d5"></div>
<div class="a" style="left:398px;top:175px;width:37px;height:83px;background:#faf9f8;box-shadow:0 3px 5px rgba(0,0,0,0.06)"></div>
<div class="t" style="left:407.5px;top:241.5px;font-size:14px;color:#161513;transform:rotate(-90deg);transform-origin:0 0;-webkit-text-stroke:0.2px #161513">Actions</div>
<div class="t" style="left:408.5px;top:901px;font-size:14px;color:#5a5652;transform:rotate(-90deg);transform-origin:0 0;-webkit-text-stroke:0.3px #5a5652">Structure</div>
<div class="a" style="left:435px;top:175px;width:275px;height:743px;background:#faf9f8;border-right:1px solid #e0ddd9;overflow:hidden">
</div>
<div class="a" style="left:453px;top:184px;width:200px;height:31px;background:#fff;border:1px solid #8f8c88;border-radius:4px"></div>
<div class="t" style="left:494px;top:191px;font-size:14px;color:#6f6c69">Filter</div>
<div class="a" style="left:702px;top:386px;width:6px;height:351px;background:#dbdad8;border-radius:3px"></div>
<svg class="a" style="left:0;top:0" width="720" height="930">
<g fill="none" stroke="#4a5d6a" stroke-width="1.5"><circle cx="472" cy="197" r="5.8"/><path d="M476.2,201.2 L480.5,205.5"/></g>
<circle cx="671.5" cy="199" r="1.6" fill="#161513"/><circle cx="677.5" cy="199" r="1.6" fill="#161513"/><circle cx="683.5" cy="199" r="1.6" fill="#161513"/>
<path d="M702,232 L705.5,228.5 L709,232 Z" fill="#c9c6c2"/><path d="M702,909 L705.5,912.5 L709,909 Z" fill="#c9c6c2"/>
<g stroke="#161513" stroke-width="1.5" fill="none" stroke-linejoin="round"><path d="M454.5,240 H467.5 L466,238.2 V234.5 A5,5.2 0 0 0 456,234.5 V238.2 Z"/><path d="M459.2,242.2 A1.8,1.6 0 0 0 462.8,242.2"/></g>
<g stroke="#161513" stroke-width="1.5" fill="none" stroke-linejoin="round"><path d="M462.5,265.5 L467.8,260.2"/><path d="M453.8,267.8 L458.8,264.5 A4.2,4.2 0 0 1 460.2,271.5 L459.8,274 Z"/><path d="M456.5,268.8 L458.5,270.8 M457.8,267.3 L459.5,269"/></g>
<g stroke="#161513" stroke-width="1.4" fill="none"><path d="M461,305 C456,300 455.5,297 455.5,295 A5.5,5.5 0 0 1 466.5,295 C466.5,297 466,300 461,305 Z"/><circle cx="461" cy="295" r="2"/></g>
<g stroke="#161513" stroke-width="1.4" fill="none"><path d="M463,319.5 H467 V332.5 H463"/><path d="M454,326 H463 M459.5,322.5 L463,326 L459.5,329.5"/></g>
<g stroke="#161513" stroke-width="1.4" fill="none"><path d="M458,349.5 H454 V362.5 H458"/><path d="M458,356 H467 M463.5,352.5 L467,356 L463.5,359.5"/></g>
<g stroke="#161513" stroke-width="1.5" fill="none"><path d="M455,378.5 V382.3 H459.2"/><path d="M455.2,382.2 A6.6,6.6 0 1 1 466.5,389.5" /><path d="M465,391.2 L463.8,392.2 M461.5,392.8 L459.8,392.8" /><path d="M453.8,388.5 L457.5,385.5 L460.8,389 L457.2,392.2 Z M458.8,387 L461.5,384.8" stroke-linejoin="round"/></g>
<g stroke="#161513" stroke-width="1.5" fill="none"><path d="M455,408.5 V412.8 H459.5"/><path d="M455.3,412.5 A7,7 0 1 1 467.5,419.5"/><path d="M466.2,421.2 L465,422.3 M453.5,417.5 L454.2,418.8 M455.5,421 L456.6,422.1"/><path d="M459,417.2 L463,421.5 M463,417.2 L459,421.5"/></g>
<g stroke="#161513" fill="none"><path d="M454,440 V450 M457,440 V450 M460.5,440 V450 M464,440 V450 M467.5,440 V450" stroke-width="1.4"/><path d="M455.5,440 V450 M462,440 V450 M466,440 V450" stroke-width="0.8"/></g>
<g stroke="#161513" stroke-width="1.4" fill="none"><circle cx="456" cy="475" r="2.3"/><circle cx="465.5" cy="470" r="2.3"/><circle cx="465.5" cy="480" r="2.3"/><path d="M458,474 L463.5,471 M458,476 L463.5,479"/></g>
<g stroke="#161513" stroke-width="1.5" fill="none"><path d="M466.5,549.2 A6.6,6.6 0 1 0 460.5,559.6"/><path d="M468.2,547 V551.6 H463.6"/><rect x="462.5" y="555.5" width="5.2" height="3.8" stroke-width="1.6"/></g>
<g stroke="#161513" stroke-width="1.5" fill="none"><path d="M453.4,582.8 H462.8 L467.8,577.8 M462.8,582.8 L467.8,588"/><path d="M464.2,577.4 H468.3 V581.2 M468.3,584.6 V588.5 H464.2"/></g>
<g stroke="#161513" stroke-width="1.4" fill="none"><path d="M468,607 V612 H454.5 M458,608.5 L454.5,612 L458,615.5"/></g>
<g stroke="#161513" stroke-width="1.5" fill="none"><path d="M453.5,637 H461.5 M459.3,634.8 L461.5,637 L459.3,639.2"/><path d="M453.5,642 H467.8 M465.3,639.5 L467.8,642 L465.3,644.5" stroke-width="1.7"/><path d="M453.5,646.8 H464.3 M462,644.6 L464.3,646.8 L462,649"/></g>
<g stroke="#161513" stroke-width="1.5" fill="none" stroke-linejoin="miter"><path d="M453.4,666.6 H461.5 M459.2,664.2 L461.7,666.6 L459.2,669"/><path d="M453.4,666.6 L460.8,676 H467.8 M465.4,673.6 L467.9,676 L465.4,678.4"/><path d="M457.2,671.1 H464.6 M462.3,668.8 L464.8,671.1 L462.3,673.4"/></g>
<g stroke="#161513" stroke-width="1.5" fill="none"><path d="M456.3,693 L459,695.7 L456.3,698.4 L453.6,695.7 Z"/><rect x="459" y="698.6" width="4.4" height="4.4"/><path d="M456.3,703.2 L459,705.9 L456.3,708.6 L453.6,705.9 Z"/><path d="M459,695.7 H461.2 V698.6 M461.2,703 V705.9 H459"/><path d="M464,697.9 L468.3,693.6 M465,693.6 H468.3 V697"/></g>
<g stroke="#161513" stroke-width="1.4" fill="none"><path d="M468,779 H454.5 M458,775.5 L454.5,779 L458,782.5"/></g>
<g stroke="#161513" stroke-width="1.4" fill="none"><path d="M454.5,813 V802 H461.5 L464.5,805 V813 Z"/><path d="M457,813 V816 H467.5 V807.5 H464.5"/><path d="M457,806 H460 M457,809 H461.5"/></g>
<g stroke="#161513" stroke-width="1.4" fill="none"><path d="M455,832 H462 L466.5,836.5 V846 H455 Z M462,832 V836.5 H466.5"/></g>
<g stroke="#161513" stroke-width="1.4" fill="none"><circle cx="461" cy="868" r="6.8"/><ellipse cx="461" cy="868" rx="3" ry="6.8"/><path d="M454.2,868 H467.8 M455.2,864.5 H466.8 M455.2,871.5 H466.8"/></g>
<path d="M456,521 L460,525 L464,521" stroke="#161513" stroke-width="1.6" fill="none"/>
<path d="M456,748 L460,752 L464,748" stroke="#161513" stroke-width="1.6" fill="none"/>
<path d="M456,914 L460,918 L464,914" stroke="#161513" stroke-width="1.6" fill="none"/>
</svg>
<div class="t al" style="left:479.5px;top:230px">Fire Notification</div>
<div class="t al" style="left:479.5px;top:260px">Get Dirty Data Status</div>
<div class="t al" style="left:479.5px;top:290px">Get Location</div>
<div class="t al" style="left:479.5px;top:319px">Login</div>
<div class="t al" style="left:479.5px;top:349px">Logout</div>
<div class="t al" style="left:479.5px;top:379px">Reset Dirty Data Status</div>
<div class="t al" style="left:479.5px;top:408px">Reset Variables</div>
<div class="t al" style="left:479.5px;top:438px">Scan Barcode</div>
<div class="t al" style="left:479.5px;top:468px">Share</div>
<div class="t al" style="left:479.5px;top:546px">For Each</div>
<div class="t al" style="left:479.5px;top:576px">If</div>
<div class="t al" style="left:479.5px;top:605px">Return</div>
<div class="t al" style="left:479.5px;top:635px">Run in Parallel</div>
<div class="t al" style="left:479.5px;top:665px">Switch</div>
<div class="t al" style="left:479.5px;top:694px">Try Catch</div>
<div class="t al" style="left:479.5px;top:772px">Navigate Back</div>
<div class="t al" style="left:479.5px;top:802px">Navigate To Flow</div>
<div class="t al" style="left:479.5px;top:832px">Navigate To Page</div>
<div class="t al" style="left:479.5px;top:861px">Open URL</div>
<div class="t ah" style="left:476px;top:516px">Logic</div>
<div class="t ah" style="left:476px;top:743px">Navigation</div>
<div class="t ah" style="left:476px;top:909px">Array</div>

<!-- canvas -->
<div class="a" style="left:710px;top:175px;width:771px;height:743px;background:#e4e1dd"></div>
<div class="a" style="left:710px;top:175px;width:771px;height:49px;background:#faf9f8"></div>
<div class="a" style="left:728px;top:184px;width:320px;height:31px;background:#fff;border:1px solid #8f8c88;border-radius:4px"></div>
<div class="t" style="left:768px;top:191px;font-size:14px;color:#6f6c69">Search</div>
<svg class="a" style="left:700px;top:170px" width="100" height="60"><g fill="none" stroke="#4a5d6a" stroke-width="1.5"><circle cx="47" cy="27" r="5.8"/><path d="M51.2,31.2 L55.5,35.5"/></g></svg>
<div class="a" style="left:1326px;top:184px;width:138px;height:31px;background:#fcfbfa;border:1px solid #8c8985;border-radius:4px"></div>
<div class="a" style="left:1413px;top:184px;width:51px;height:31px;background:#e4f0f6;border:1px solid #2b7c9b;border-radius:0 4px 4px 0"></div>
<div class="t sbd" style="left:1340.5px;top:192px">Summary</div>
<div class="t sbd" style="left:1427.5px;top:192px">Full</div>
<div class="a" style="left:751px;top:362px;width:472px;height:118px;background:#fff;border-radius:6px;box-shadow:0 1px 3px rgba(0,0,0,0.15)"></div>
<svg class="a" style="left:751px;top:362px" width="35" height="118"><path d="M6,0 H35 V118 H6 A6,6 0 0 1 0,112 V6 A6,6 0 0 1 6,0 Z" fill="url(#fan)"/></svg>
<svg class="a" style="left:760px;top:378px" width="22" height="18"><g fill="none" stroke="#fff" stroke-width="2"><path d="M2,8 H10 L15,3 M10,8 L15,13"/><path d="M12,2 H17 V6 M17,10 V14 H13"/></g></svg>
<div class="t" style="left:804px;top:381px;font-size:13.5px;font-weight:bold;line-height:16px">if</div>
<div class="t mono" style="left:819.5px;top:381.5px">(SelectedTabElement === 'Supplier')</div>
<div class="a" style="left:804px;top:405px;width:401px;height:60px;background:#fff;border-radius:6px;box-shadow:0 1px 4px rgba(0,0,0,0.16)"></div>
<svg class="a" style="left:804px;top:405px" width="35" height="60"><path d="M6,0 H35 V60 H6 A6,6 0 0 1 0,54 V6 A6,6 0 0 1 6,0 Z" fill="url(#gr)"/></svg>
<svg class="a" style="left:811px;top:423px" width="24" height="24"><g fill="none" stroke="#fff" stroke-width="1.7"><path d="M3.5,14.5 V3 H11 L14,6 V14.5 Z"/><path d="M6.5,14.5 V18.5 H18.5 V8 H14"/><path d="M6,7.5 H10 M6,11 H11.5" stroke-width="1.9"/></g></svg>
<div class="t mono" style="left:857px;top:429px">toSupplierflow = </div>
<div class="t" style="left:981.5px;top:427px;font-size:13px;font-weight:bold;line-height:16px;letter-spacing:-0.45px">Navigate To Flow</div>
<div class="t mono" style="left:1087px;top:429px">supplierflow/</div>
<div class="a" style="left:751px;top:481px;width:472px;height:118px;background:#fff;border-radius:6px;box-shadow:0 1px 3px rgba(0,0,0,0.15)"></div>
<svg class="a" style="left:751px;top:481px" width="35" height="118"><path d="M6,0 H35 V118 H6 A6,6 0 0 1 0,112 V6 A6,6 0 0 1 6,0 Z" fill="url(#fan)"/></svg>
<svg class="a" style="left:760px;top:497px" width="22" height="18"><g fill="none" stroke="#fff" stroke-width="2"><path d="M2,8 H10 L15,3 M10,8 L15,13"/><path d="M12,2 H17 V6 M17,10 V14 H13"/></g></svg>
<div class="t" style="left:804px;top:500px;font-size:13.5px;font-weight:bold;line-height:16px">if</div>
<div class="t mono" style="left:819.5px;top:500.5px">(SelectedTabElement === 'Customer')</div>
<div class="a" style="left:804px;top:524px;width:401px;height:60px;background:#fff;border-radius:6px;box-shadow:0 1px 4px rgba(0,0,0,0.16)"></div>
<svg class="a" style="left:804px;top:524px" width="35" height="60"><path d="M6,0 H35 V60 H6 A6,6 0 0 1 0,54 V6 A6,6 0 0 1 6,0 Z" fill="url(#gr)"/></svg>
<svg class="a" style="left:811px;top:542px" width="24" height="24"><g fill="none" stroke="#fff" stroke-width="1.7"><path d="M3.5,14.5 V3 H11 L14,6 V14.5 Z"/><path d="M6.5,14.5 V18.5 H18.5 V8 H14"/><path d="M6,7.5 H10 M6,11 H11.5" stroke-width="1.9"/></g></svg>
<div class="t mono" style="left:857px;top:548px">toCustomerflow = </div>
<div class="t" style="left:981.5px;top:546px;font-size:13px;font-weight:bold;line-height:16px;letter-spacing:-0.45px">Navigate To Flow</div>
<div class="t mono" style="left:1087px;top:548px">customerflow/</div>
<div class="a" style="left:751px;top:243px;width:474px;height:119px;background:#fff;border-radius:6px;box-shadow:0 1px 3px rgba(0,0,0,0.12)"></div>
<svg class="a" style="left:751px;top:243px" width="35" height="119"><path d="M6,0 H35 V119 H6 A6,6 0 0 1 0,113 V6 A6,6 0 0 1 6,0 Z" fill="url(#fan)"/></svg>
<div class="a" style="left:784px;top:242px;width:441px;height:120px;border:2.5px solid #0d0c0b;border-radius:0 6px 6px 0"></div>
<svg class="a" style="left:760px;top:259px" width="22" height="18"><g fill="none" stroke="#fff" stroke-width="2"><path d="M2,8 H10 L15,3 M10,8 L15,13"/><path d="M12,2 H17 V6 M17,10 V14 H13"/></g></svg>
<div class="t" style="left:804px;top:262px;font-size:13.5px;font-weight:bold;line-height:16px">if</div>
<div class="t mono" style="left:819.5px;top:262.5px">(SelectedTabElement === 'Employee')</div>
<div class="a" style="left:804px;top:286px;width:401px;height:60px;background:#fff;border-radius:6px;box-shadow:0 1px 4px rgba(0,0,0,0.16)"></div>
<svg class="a" style="left:804px;top:286px" width="35" height="60"><path d="M6,0 H35 V60 H6 A6,6 0 0 1 0,54 V6 A6,6 0 0 1 6,0 Z" fill="url(#gr)"/></svg>
<svg class="a" style="left:811px;top:304px" width="24" height="24"><g fill="none" stroke="#fff" stroke-width="1.7"><path d="M3.5,14.5 V3 H11 L14,6 V14.5 Z"/><path d="M6.5,14.5 V18.5 H18.5 V8 H14"/><path d="M6,7.5 H10 M6,11 H11.5" stroke-width="1.9"/></g></svg>
<div class="t mono" style="left:857px;top:310px">toEmployeeflow = </div>
<div class="t" style="left:981.5px;top:308px;font-size:13px;font-weight:bold;line-height:16px;letter-spacing:-0.45px">Navigate To Flow</div>
<div class="t mono" style="left:1087px;top:310px">employeeflow/</div>
<svg class="a" style="left:750px;top:355px" width="40" height="20"><path d="M5,6.5 H12.5 L18.5,13 L25.5,6.5 H35" fill="none" stroke="#d3cfca" stroke-width="1.1"/></svg>
<svg class="a" style="left:750px;top:474px" width="40" height="20"><path d="M5,6.5 H12.5 L18.5,13 L25.5,6.5 H35" fill="none" stroke="#d3cfca" stroke-width="1.1"/></svg>
<svg class="a" style="left:1099px;top:803px" width="22" height="28"><path d="M4.3,4 V20.5 L8.3,17 L11.2,23.3 L13.6,22.3 L10.9,16.6 H15.6 Z" fill="#fff" stroke="#161513" stroke-width="1.2" stroke-linejoin="round"/></svg>
<!-- properties -->
<div class="a" style="left:1481px;top:175px;width:397px;height:743px;background:#faf9f8;border-left:1px solid #dedbd7"></div>
<div class="a" style="left:1878px;top:175px;width:38px;height:743px;background:#f1efed;border-left:1px solid #dcd9d5"></div>
<div class="a" style="left:1877px;top:175px;width:39px;height:92px;background:#faf9f8;box-shadow:0 3px 5px rgba(0,0,0,0.06)"></div>
<div class="t" style="left:1905px;top:190px;font-size:14px;color:#161513;transform:rotate(90deg);transform-origin:0 0;-webkit-text-stroke:0.4px #161513">Properties</div>
<div class="t sbd" style="left:1499px;top:187px;letter-spacing:0.35px">If | then</div>
<svg class="a" style="left:1820px;top:185px" width="40" height="20"><circle cx="15" cy="8.5" r="1.6" fill="#161513"/><circle cx="21" cy="8.5" r="1.6" fill="#161513"/><circle cx="27" cy="8.5" r="1.6" fill="#161513"/></svg>
<div class="t sbd" style="left:1499px;top:237px">Description</div>
<div class="a" style="left:1499px;top:258px;width:362px;height:31px;background:#fff;border:1px solid #8f8c88;border-radius:4px"></div>
<div class="t sbd" style="left:1499px;top:317px">Condition</div>
<div class="t" style="left:1565px;top:317px;font-size:13px;color:#227e9e">*</div>
<div class="a" style="left:1751px;top:306px;width:110px;height:29px;background:#fcfbfa;border:1px solid #8c8985;border-radius:4px"></div>
<div class="a" style="left:1751px;top:306px;width:55px;height:29px;background:#e4f0f6;border:1px solid #2b7c9b;border-radius:4px 0 0 4px"></div>
<svg class="a" style="left:1760px;top:306px" width="100" height="29"><path d="M13,8 L24,12.5 L19.5,14 L23.5,18.5 L22,20 L18,15.5 L16.5,20 Z" fill="none" stroke="#161513" stroke-width="1.5" stroke-linejoin="round"/>
<path d="M70,10.5 L66,14.5 L70,18.5 M76,10.5 L80,14.5 L76,18.5" fill="none" stroke="#161513" stroke-width="1.5"/></svg>
<div class="a" style="left:1499px;top:342px;width:362px;height:1px;background:#dedbd7"></div>
<div class="a" style="left:1499px;top:357px;width:362px;height:133px;background:#faf9f8;border:1px solid #e2dfdb;border-radius:5px"></div>
<div class="a" style="left:1513px;top:370px;width:334px;height:31px;background:#fff;border:1px solid #8f8c88;border-radius:4px"></div>
<div class="t" style="left:1527px;top:378px;font-size:13.5px;letter-spacing:-0.2px">SelectedTabElement</div>
<div class="a" style="left:1513px;top:408px;width:250px;height:30px;background:#fff;border:1px solid #8f8c88;border-radius:4px"></div>
<div class="a" style="left:1725px;top:413px;width:1px;height:20px;background:#8f8c88"></div>
<svg class="a" style="left:1730px;top:410px" width="24" height="24"><path d="M6.5,10 H14.5 L10.5,14 Z" fill="#161513"/></svg>
<div class="t" style="left:1527px;top:416px;font-size:13.5px">equals</div>
<div class="a" style="left:1513px;top:445px;width:334px;height:31px;background:#fff;border:1px solid #8f8c88;border-radius:4px"></div>
<div class="t" style="left:1527px;top:453px;font-size:13.5px">Employee</div>
<div class="a" style="left:1499px;top:503px;width:109px;height:31px;background:#e6e3df;border-radius:4px"></div>
<svg class="a" style="left:1505px;top:508px" width="24" height="22"><path d="M4.5,10.5 H20.5 M12.5,2.5 V18.5" stroke="#161513" stroke-width="1.6"/></svg>
<div class="t sbd" style="left:1534.5px;top:511.5px">Condition</div>
<div id="status" class="a"></div>
<!-- status -->

<svg class="a" style="left:0;top:920px" width="500" height="40" viewBox="0 920 500 40"><g fill="none" stroke="#161513" stroke-width="1.5">
<path d="M24.5,944 H20.2 V931.8 H32 V940"/><path d="M22.3,935.2 H23.6 M25.2,935.2 H29.5 M22.3,938.2 H23.6 M25.2,938.2 H29.5" stroke-width="1.6"/>
<circle cx="121.2" cy="936.3" r="5.6"/><path d="M125.2,940.3 L129.6,944.7"/>
<path d="M253,944.5 H246.2 V931.2 H257.2 V939.5"/><path d="M248.3,934.8 H249.6 M251,934.8 H255 M248.3,937.8 H249.6 M251,937.8 H255" stroke-width="1.6"/>
<path d="M332,931 V944.5 H346.5"/><path d="M335,932.2 H336.3 M337.6,932.2 H342.5 M335,935.5 H336.3 M337.6,935.5 H345 M337.6,938.6 H338.9 M340.2,938.6 H345.8 M335,941.6 H336.3 M337.6,941.6 H343.5" stroke-width="1.5"/>
<path d="M424.8,930.8 H434.2 M426.8,931 V935.5 L423.3,941.8 A2.2,2.2 0 0 0 425.2,944.6 H433.8 A2.2,2.2 0 0 0 435.7,941.8 L432.2,935.5 V931"/><path d="M426.5,940.6 H432.5 M429.5,937.5 V937.6" stroke-width="1.5"/>
</g><path d="M26.5,944.8 L29.3,940 L32.1,944.8 Z" fill="#161513"/><circle cx="256.2" cy="942.8" r="2.6" fill="#161513"/></svg>
<div class="t sb" style="left:48px">Audits</div>
<div class="t sb" style="left:144px">Find in Files</div>
<div class="t sb" style="left:273px">Logs</div>
<div class="t sb" style="left:361px">Trace</div>
<div class="t sb" style="left:451px">Tests</div>
<div class="t" style="left:1814px;top:931px;font-size:13px;color:#161513;letter-spacing:0.05px">Saved 8:52 PM</div>
<div class="a" style="left:0;top:962px;width:1920px;height:1px;background:#b9c2c3"></div>
<div class="a" style="left:0;top:963px;width:1920px;height:2px;background:#dfe9eb"></div>
</body></html>
